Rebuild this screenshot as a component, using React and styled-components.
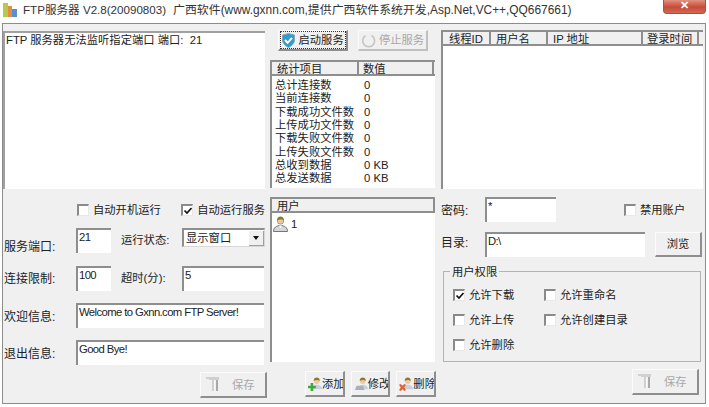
import React from 'react';
import styled, { createGlobalStyle } from 'styled-components';

const FONT = `"Liberation Sans", "Noto Sans CJK SC", sans-serif`;

const GlobalStyle = createGlobalStyle`
  html, body { margin: 0; padding: 0; background: #fff; }
  body { font: 11.3px/14px ${FONT}; color: #222; }
  * { box-sizing: border-box; }
  svg { flex: none; }
`;

function BarsIcon() {
  return (
    <svg width="15" height="15" viewBox="0 0 15 15">
      <rect x="0" y="1" width="5" height="14" fill="#b8c850" />
      <rect x="5" y="4" width="4" height="11" fill="#e09040" />
      <rect x="9" y="7" width="5" height="8" fill="#5a90d0" />
    </svg>
  );
}

function ShieldIcon() {
  return (
    <svg width="15" height="15" viewBox="0 0 15 15">
      <path d="M7.500 .5l6 1.500v5c0 3.500-3 6-6 7.500-3-1.500-6-4-6-7.500V2z" fill="#2f9ccf" stroke="#8aa8b8" />
      <path d="M4 7l2.600 2.800 4.400-5" fill="none" stroke="#fff" strokeWidth="2" />
    </svg>
  );
}

function SpinIcon() {
  return (
    <svg width="15" height="15" viewBox="0 0 15 15">
      <path d="M10.500 2.500a6 6 0 1 1-6 .2" fill="none" stroke="#c4c4c4" strokeWidth="1.600" />
    </svg>
  );
}

function SaveIcon() {
  return (
    <svg width="14" height="15" viewBox="0 0 14 15">
      <path d="M0 0h13v3H8v11H6V3H3V2H0z" fill="#d0d0d0" />
      <path d="M10 3h2v11h-2z" fill="#a8a8a8" />
      <path d="M8 3h1v10H8z" fill="#fafafa" />
    </svg>
  );
}

const BADGE = {
  add: <path d="M0 11h3V8h3v3h3v3H6v3H3v-3H0z" fill="#3fa83f" />,
  edit: <path d="M1 16l2-5h7l2 5z" fill="#a8b0b8" />,
  remove: <path d="M0 10l2-1 2 2 2-2 2 1-2 3 2 3-2 1-2-2-2 2-2-1 2-3z" fill="#d8683c" />,
};

function ListUserIcon() {
  return (
    <svg width="15" height="16" viewBox="0 0 15 16">
      <path d="M.5 15.500c0-4 3-6 7-6s7 2 7 6z" fill="#d4d6da" stroke="#55585e" strokeWidth=".8" />
      <path d="M6 9.500h3l-1.500 3z" fill="#fff" />
      <circle cx="7.500" cy="5" r="3.200" fill="#eec9a0" stroke="#6a6030" strokeWidth=".5" />
      <path d="M4 4.800C4 1.800 5.500.5 7.500.5S11 1.800 11 4.800C9.500 3.300 6.500 3 4 4.800z" fill="#8a7a2c" />
    </svg>
  );
}

function ButtonUserIcon({ badge }) {
  return (
    <svg width="14" height="17" viewBox="0 0 16 17">
      <path d="M5 15c0-3 2-5 5-5s6 2 6 5z" fill="#c8d0e0" />
      <circle cx="10" cy="6" r="3.200" fill="#eec9a0" />
      <path d="M6.500 5.500C6.500 2.800 8 1.500 10 1.500s3.500 1.300 3.500 4C12 4.200 9 3.800 6.500 5.500z" fill="#8a7a2c" />
      {BADGE[badge]}
    </svg>
  );
}

function Check({ checked }) {
  return (
    <CheckBox>
      {checked && (
        <svg width="10" height="10" viewBox="0 0 10 10">
          <path d="M1.500 4.500l2.500 2.500 4.500-5" fill="none" stroke="#111" strokeWidth="1.700" />
        </svg>
      )}
    </CheckBox>
  );
}

const threadColumns = [
  { label: '线程ID', width: 48, pad: 6 },
  { label: '用户名', width: 57, pad: 5 },
  { label: 'IP 地址', width: 95, pad: 5 },
  { label: '登录时间', width: 56, pad: 4 },
];

const stats = [
  ['总计连接数', '0'],
  ['当前连接数', '0'],
  ['下载成功文件数', '0'],
  ['上传成功文件数', '0'],
  ['下载失败文件数', '0'],
  ['上传失败文件数', '0'],
  ['总收到数据', '0 KB'],
  ['总发送数据', '0 KB'],
];

export default function App() {
  return (
    <>
      <GlobalStyle />
      <Window>
        <TitleBar>
          <BarsIcon />
          <TitleText $size={11.6} $left={5}>FTP服务器 V2.8(20090803)</TitleText>
          <TitleText $size={11.9} $left={7}>广西软件(www.gxnn.com,提供广西软件系统开发,Asp.Net,VC++,QQ667661)</TitleText>
          <CloseButton>✕</CloseButton>
        </TitleBar>
        <Client>
          <LogBox>FTP 服务器无法监听指定端口 端口:&nbsp; 21</LogBox>

          <MiddleTop>
            <ServiceRow>
              <ServiceButton>
                <FocusRing>
                  <ShieldIcon />
                  启动服务
                </FocusRing>
              </ServiceButton>
              <ServiceButton $disabled>
                <SpinIcon />
                停止服务
              </ServiceButton>
            </ServiceRow>
            <StatsTable>
              <HeadRow>
                <HeadCell $width={87} $pad={5}>统计项目</HeadCell>
                <HeadCell $width={75} $pad={4}>数值</HeadCell>
              </HeadRow>
              <StatsBody>
                {stats.map(([name, value]) => (
                  <StatRow key={name}>
                    <StatName>{name}</StatName>
                    <span>{value}</span>
                  </StatRow>
                ))}
              </StatsBody>
            </StatsTable>
          </MiddleTop>

          <ThreadList>
            <HeadRow>
              {threadColumns.map((col) => (
                <HeadCell key={col.label} $width={col.width} $pad={col.pad}>{col.label}</HeadCell>
              ))}
            </HeadRow>
          </ThreadList>

          <FormColumn>
            <CheckRow>
              <CheckItem $width={105}><Check />自动开机运行</CheckItem>
              <CheckItem><Check checked />自动运行服务</CheckItem>
            </CheckRow>
            <FormRow $top={11}>
              <FieldLabel $pad={12}>服务端口:</FieldLabel>
              <Input $width={35}>21</Input>
              <InlineLabel>运行状态:</InlineLabel>
              <Select>
                显示窗口
                <SelectArrow />
              </Select>
            </FormRow>
            <FormRow $top={13}>
              <FieldLabel $pad={6}>连接限制:</FieldLabel>
              <Input $width={35}>100</Input>
              <InlineLabel>超时(分):</InlineLabel>
              <Input $width={82}>5</Input>
            </FormRow>
            <FormRow $top={12}>
              <FieldLabel $pad={7}>欢迎信息:</FieldLabel>
              <Input $width={188}>Welcome to Gxnn.com FTP Server!</Input>
            </FormRow>
            <FormRow $top={12}>
              <FieldLabel $pad={7}>退出信息:</FieldLabel>
              <Input $width={188}>Good Bye!</Input>
            </FormRow>
            <SaveButton $left={197}><SaveIcon />保存</SaveButton>
          </FormColumn>

          <UserColumn>
            <UserList>
              <HeadRow>
                <HeadCell $width={163} $pad={5}>用户</HeadCell>
              </HeadRow>
              <UserEntry>
                <ListUserIcon />
                1
              </UserEntry>
            </UserList>
            <UserButtons>
              <UserButton><ButtonUserIcon badge="add" />添加</UserButton>
              <UserButton><ButtonUserIcon badge="edit" />修改</UserButton>
              <UserButton><ButtonUserIcon badge="remove" />删除</UserButton>
            </UserButtons>
          </UserColumn>

          <AccountColumn>
            <AccountRow>
              <AccountLabel $pad={7}>密码:</AccountLabel>
              <Input $width={71}>*</Input>
              <DisableItem><Check />禁用账户</DisableItem>
            </AccountRow>
            <AccountRow $top={10}>
              <AccountLabel $pad={4}>目录:</AccountLabel>
              <Input $width={160}>D:\</Input>
              <BrowseButton>浏览</BrowseButton>
            </AccountRow>
            <Group>
              <Legend>用户权限</Legend>
              <GroupGrid>
                <CheckItem><Check checked />允许下载</CheckItem>
                <CheckItem><Check />允许重命名</CheckItem>
                <CheckItem><Check />允许上传</CheckItem>
                <CheckItem><Check />允许创建目录</CheckItem>
                <CheckItem><Check />允许删除</CheckItem>
              </GroupGrid>
            </Group>
            <SaveButton $left={191}><SaveIcon />保存</SaveButton>
          </AccountColumn>
        </Client>
      </Window>
    </>
  );
}

const Window = styled.div`
  position: relative;
  width: 709px;
  height: 407px;
  overflow: hidden;
  display: flex;
  flex-direction: column;
  background: #fff;
`;
const TitleBar = styled.div`
  height: 23px;
  flex: none;
  display: flex;
  align-items: center;
  padding: 0 3px 4px 3px;
  color: #333;
`;
const TitleText = styled.span`
  margin-left: ${(p) => p.$left}px;
  font-size: ${(p) => p.$size}px;
  white-space: nowrap;
`;
const CloseButton = styled.div`
  position: absolute;
  top: 0;
  left: 663px;
  width: 43px;
  height: 14px;
  border-radius: 0 0 4px 4px;
  border: 1px solid #8f5a50;
  border-top: 0;
  background: linear-gradient(#e09080, #c84a36 55%, #d06a58);
  color: #fff;
  font-size: 11px;
  font-weight: bold;
  line-height: 11px;
  text-align: center;
`;
const Client = styled.div`
  margin: 0 3px 0 2px;
  height: 381px;
  padding-top: 6px;
  background: #f0f0f0;
  border: 1px solid #8c8c8c;
  display: grid;
  grid-template-columns: 262px 166px 262px;
  grid-template-rows: 160px 1fr;
  column-gap: 5px;
  row-gap: 7px;
`;
const LogBox = styled.div`
  margin-top: 1px;
  height: 158px;
  padding: 0 1px;
  background: #fff;
  border-top: 2px solid #a0a0a0;
  border-left: 2px solid #a0a0a0;
`;
const MiddleTop = styled.div`
  display: flex;
  flex-direction: column;
`;
const ServiceRow = styled.div`
  display: flex;
  gap: 10px;
  padding-left: 8px;
`;
const RaisedButton = styled.div`
  display: flex;
  align-items: center;
  justify-content: center;
  background: #f0f0f0;
  border-top: 1px solid #fbfbfb;
  border-left: 1px solid #fbfbfb;
  border-right: 2px solid #8e8e8e;
  border-bottom: 2px solid #8e8e8e;
  white-space: nowrap;
`;
const ServiceButton = styled(RaisedButton)`
  width: 70px;
  height: 21px;
  gap: 3px;
  color: ${(p) => (p.$disabled ? '#a8a8a8' : '#222')};
  ${(p) => p.$disabled && 'border-right-color: #c0c0c0; border-bottom-color: #c0c0c0;'}
`;
const FocusRing = styled.div`
  display: flex;
  align-items: center;
  gap: 3px;
  width: 64px;
  height: 16px;
  outline: 1px dotted #333;
`;
const StatsTable = styled.div`
  margin-top: 9px;
  width: 165px;
  height: 128px;
  display: flex;
  flex-direction: column;
  background: #fff;
  border-left: 2px solid #8e8e8e;
`;
const HeadRow = styled.div`
  display: flex;
  height: 16px;
  flex: none;
  background: #f0f0f0;
  border-top: 2px solid #8e8e8e;
  border-bottom: 2px solid #8e8e8e;
`;
const HeadCell = styled.div`
  width: ${(p) => p.$width}px;
  padding-left: ${(p) => p.$pad}px;
  border-right: 2px solid #8e8e8e;
  line-height: 14px;
  white-space: nowrap;
`;
const StatsBody = styled.div`
  padding: 3px 0 0 3px;
`;
const StatRow = styled.div`
  display: flex;
  height: 13.330px;
  line-height: 13.330px;
`;
const StatName = styled.span`
  width: 89px;
  flex: none;
`;
const ThreadList = styled.div`
  height: 159px;
  background: #fff;
  border-left: 2px solid #8e8e8e;
`;
const FormColumn = styled.div`
  display: flex;
  flex-direction: column;
  padding-top: 6px;
`;
const CheckRow = styled.div`
  display: flex;
  padding-left: 74px;
`;
const CheckItem = styled.label`
  display: flex;
  align-items: center;
  gap: 4px;
  height: 14px;
  white-space: nowrap;
  ${(p) => p.$width && `width: ${p.$width}px;`}
`;
const CheckBox = styled.span`
  width: 12px;
  height: 12px;
  flex: none;
  display: flex;
  align-items: center;
  justify-content: center;
  background: #fff;
  border-top: 2px solid #8a8a8a;
  border-left: 2px solid #8a8a8a;
  border-right: 1px solid #e8e8e8;
  border-bottom: 1px solid #e8e8e8;
`;
const FormRow = styled.div`
  display: flex;
  margin-top: ${(p) => p.$top}px;
  height: 25px;
`;
const FieldLabel = styled.span`
  width: 73px;
  flex: none;
  padding: ${(p) => p.$pad}px 0 0 1px;
  font-size: 12px;
  white-space: nowrap;
`;
const InlineLabel = styled.span`
  width: 61px;
  margin-left: 10px;
  flex: none;
  padding-top: 5px;
  white-space: nowrap;
`;
const Input = styled.div`
  width: ${(p) => p.$width}px;
  height: 25px;
  flex: none;
  padding: 0 1px;
  background: #fff;
  border-top: 2px solid #8e8e8e;
  border-left: 2px solid #8e8e8e;
  letter-spacing: -0.6px;
  white-space: nowrap;
  overflow: hidden;
`;
const Select = styled.div`
  width: 83px;
  height: 19px;
  flex: none;
  display: flex;
  align-items: center;
  justify-content: space-between;
  padding-left: 2px;
  background: #fff;
  border-top: 2px solid #8e8e8e;
  border-left: 2px solid #8e8e8e;
  border-right: 1px solid #d8d8d8;
  border-bottom: 1px solid #d8d8d8;
`;
const SelectArrow = styled.span`
  width: 15px;
  height: 15px;
  display: flex;
  align-items: center;
  justify-content: center;
  background: #f0f0f0;
  border-right: 1px solid #a0a0a0;
  border-bottom: 1px solid #a0a0a0;
  &::after {
    content: '';
    border: 3px solid transparent;
    border-top: 4px solid #111;
    margin-top: 4px;
  }
`;
const SaveButton = styled(RaisedButton)`
  width: 67px;
  height: 26px;
  flex: none;
  justify-content: flex-start;
  gap: 12px;
  padding-left: 5px;
  margin: 7px 0 0 ${(p) => p.$left}px;
  color: #a8a8a8;
`;
const UserColumn = styled.div`
  display: flex;
  flex-direction: column;
`;
const UserList = styled.div`
  width: 165px;
  height: 165px;
  background: #fff;
  border-left: 2px solid #8e8e8e;
`;
const UserEntry = styled.div`
  display: flex;
  align-items: center;
  gap: 3px;
  margin-top: 3px;
  padding-left: 1px;
`;
const UserButtons = styled.div`
  display: flex;
  gap: 6px;
  margin-top: 9px;
  padding-left: 35px;
`;
const UserButton = styled(RaisedButton)`
  width: 40px;
  height: 26px;
  overflow: hidden;
  justify-content: flex-start;
  padding-left: 2px;
`;
const AccountColumn = styled.div`
  display: flex;
  flex-direction: column;
`;
const AccountRow = styled.div`
  display: flex;
  margin-top: ${(p) => p.$top || 0}px;
  height: 25px;
`;
const AccountLabel = styled.span`
  width: 44px;
  flex: none;
  padding-top: ${(p) => p.$pad}px;
  font-size: 12px;
  white-space: nowrap;
`;
const DisableItem = styled(CheckItem)`
  margin: 6px 0 0 68px;
`;
const BrowseButton = styled(RaisedButton)`
  width: 47px;
  height: 25px;
  margin-left: 10px;
`;
const Group = styled.div`
  position: relative;
  margin: 14px 0 0 2px;
  width: 258px;
  height: 91px;
  border: 1px solid #b4b4b4;
`;
const Legend = styled.span`
  position: absolute;
  top: -6px;
  left: 6px;
  padding: 0 2px;
  line-height: 12px;
  background: #f0f0f0;
`;
const GroupGrid = styled.div`
  display: grid;
  grid-template-columns: 91px 1fr;
  grid-auto-rows: 25px;
  padding: 16px 0 0 9px;
`;
